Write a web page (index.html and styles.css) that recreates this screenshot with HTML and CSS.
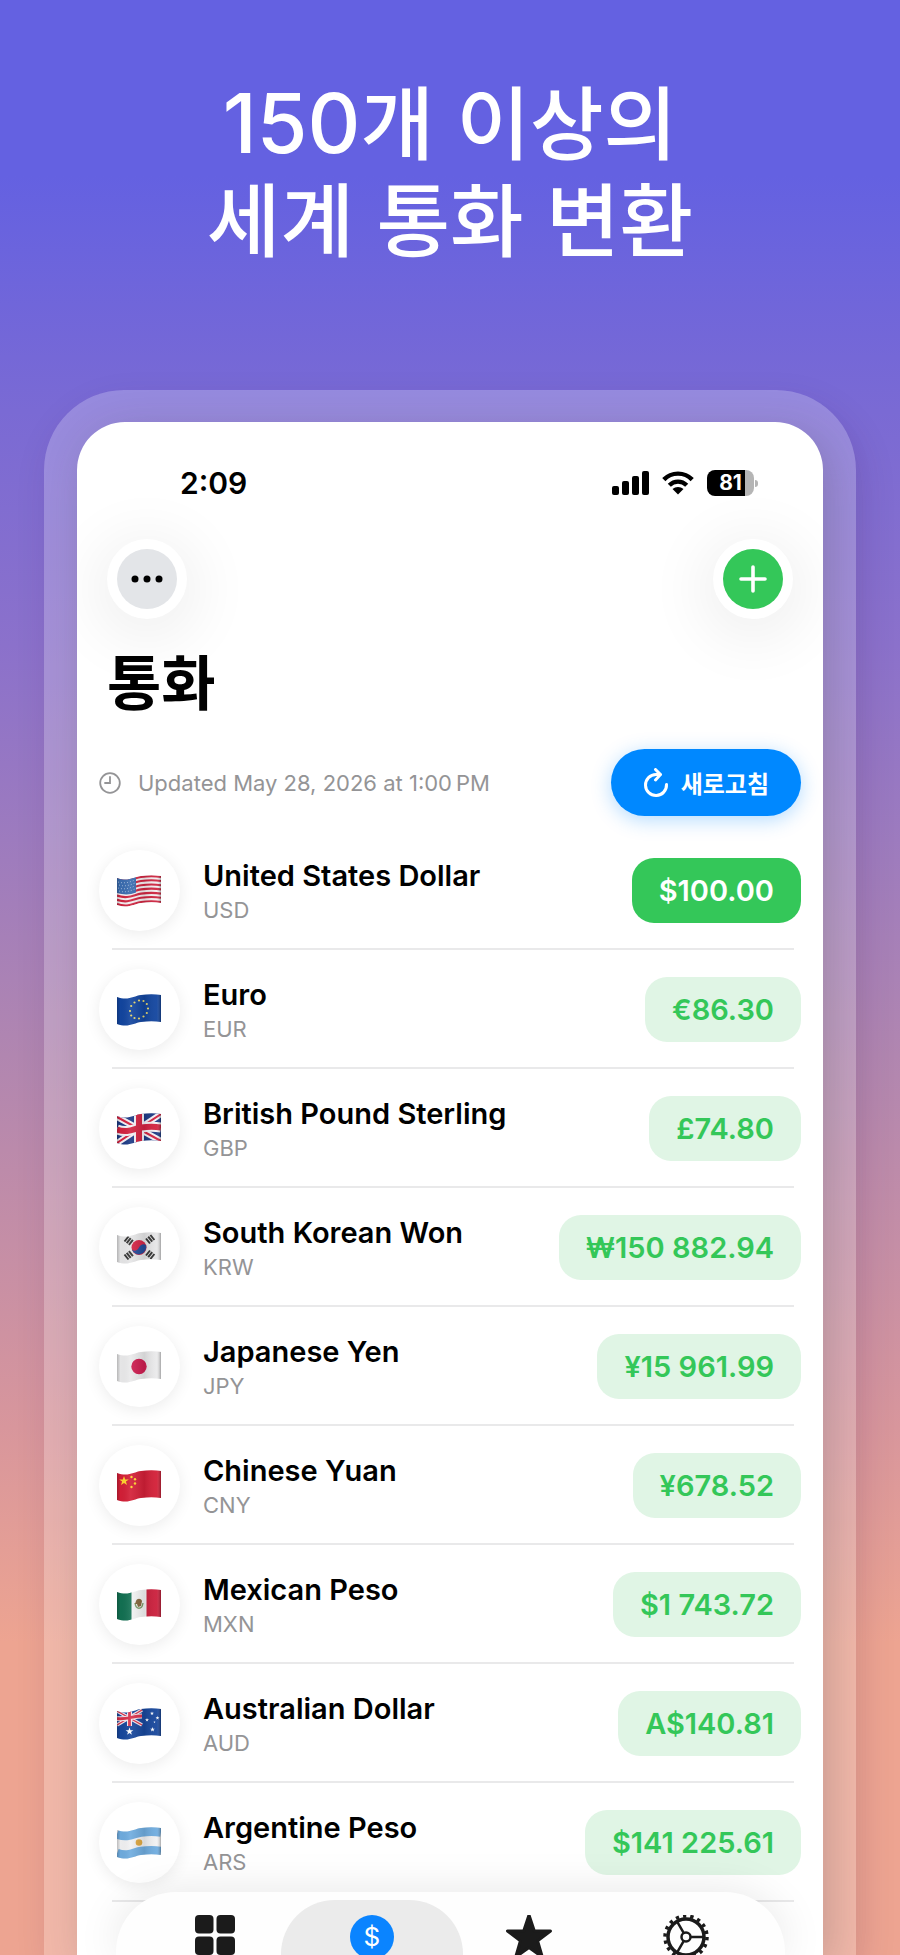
FILE: index.html
```html
<!DOCTYPE html>
<html lang="ko">
<head>
<meta charset="utf-8">
<meta name="viewport" content="width=device-width, initial-scale=1">
<title>통화</title>
<link rel="stylesheet" href="styles.css">
</head>
<body>
<svg class="defs" aria-hidden="true">
  <defs>
    <path id="wave" d="M0 3C11 7 17 2 24 1S38 0 44 1"/>
    <clipPath id="flag"><path d="M0 3C11 7 17 2 24 1S38 0 44 1V28C38 27 31 27 24 28S11 34 0 30Z"/></clipPath>
    <linearGradient id="fold">
      <stop offset="0" stop-color="#000" stop-opacity=".22"/>
      <stop offset=".08" stop-color="#000" stop-opacity=".02"/>
      <stop offset=".3" stop-color="#fff" stop-opacity=".08"/>
      <stop offset=".62" stop-color="#000" stop-opacity=".1"/>
      <stop offset=".9" stop-color="#fff" stop-opacity=".05"/>
      <stop offset="1" stop-color="#000" stop-opacity=".3"/>
    </linearGradient>
    <path id="star" d="M0-5L1.2-1.6 4.8-1.6 1.9.6 3 4 0 1.9-3 4-1.9.6-4.8-1.6-1.2-1.6Z"/>
  </defs>
</svg>
<main class="stage">
  <h1 class="headline"><span class="digits">150</span>개 이상의<br>세계 통화 변환</h1>
  <div class="phone">
    <div class="screen">
      <div class="status">
        <span class="time">2:09</span>
        <div class="status-icons">
          <svg width="37" height="24" viewBox="0 0 37 24"><g><rect x="0" y="15" width="7" height="9" rx="2"/><rect x="10" y="10" width="7" height="14" rx="2"/><rect x="20" y="5" width="7" height="19" rx="2"/><rect x="30" y="0" width="7" height="24" rx="2"/></g></svg>
          <svg width="32" height="24" viewBox="0 0 32 24"><g fill="none" stroke="#000" stroke-width="4.400"><path d="M1.800 8.600C9.500 .6 22.500 .6 30.200 8.600"/><path d="M7.300 14.200C12.200 9.400 19.800 9.400 24.700 14.200"/></g><path d="M10.500 18.100C13.600 15.200 18.400 15.200 21.500 18.100L16 23.500Z"/></svg>
          <div class="battery"><span>81</span></div>
        </div>
      </div>
      <div class="toolbar">
        <button class="round" aria-label="더 보기"><svg width="60" height="60" viewBox="0 0 60 60"><circle cx="30" cy="30" r="30" fill="#e3e5e8"/><circle cx="18" cy="30" r="3.500"/><circle cx="30" cy="30" r="3.500"/><circle cx="42" cy="30" r="3.500"/></svg></button>
        <button class="round" aria-label="추가"><svg width="60" height="60" viewBox="0 0 60 60"><circle cx="30" cy="30" r="30" fill="#34c759"/><path d="M30 18V42M18 30H42" stroke="#fff" stroke-width="3.600" stroke-linecap="round"/></svg></button>
      </div>
      <h2 class="title">통화</h2>
      <div class="update">
        <svg width="22" height="22" viewBox="0 0 22 22" fill="none" stroke="#949496" stroke-width="1.800" stroke-linecap="round"><circle cx="11" cy="11" r="9.800"/><path d="M11 5V11H6"/></svg>
        <span class="updated">Updated May 28, 2026 at 1:00&#8239;PM</span>
        <button class="refresh"><svg width="26" height="30" viewBox="0 0 26 30" fill="none" stroke="#fff" stroke-width="3" stroke-linecap="round" stroke-linejoin="round"><path d="M23.500 16.500A10.500 10.500 0 1 1 13 6.500H17"/><path d="M12.500 1.500L17.500 6.500 12.500 12"/></svg>새로고침</button>
      </div>
      <ul class="list">
        <li class="row">
          <span class="badge"><svg width="44" height="32" viewBox="0 0 44 32"><g clip-path="url(#flag)"><rect width="44" height="34" fill="#f4eef0"/><g fill="none" stroke="#cf2540" stroke-width="2.100"><use href="#wave" y="1"/><use href="#wave" y="5"/><use href="#wave" y="9.200"/><use href="#wave" y="13.400"/><use href="#wave" y="17.600"/><use href="#wave" y="21.800"/><use href="#wave" y="26"/></g><path d="M0 0H19V17.500C13 20 7 20 0 18Z" fill="#3a6caf"/><g fill="none" stroke="#b9cde8" stroke-width=".8" stroke-dasharray="1 2"><path d="M1 7C8 9 13 7 18 5M2 10C8 12 13 10 18 8M1 13C8 15 13 13 18 11M2 16C8 18 13 16 18 14"/></g><rect width="44" height="34" fill="url(#fold)"/></g></svg></span>
          <span class="name"><b>United States Dollar</b><small>USD</small></span>
          <button class="amount active">$100.00</button>
        </li>
        <li class="row">
          <span class="badge"><svg width="44" height="32" viewBox="0 0 44 32"><g clip-path="url(#flag)"><rect width="44" height="34" fill="#12459f"/><g fill="#e9d86b"><circle cx="22" cy="6.500" r="1.100"/><circle cx="26.500" cy="7" r="1.100"/><circle cx="29.800" cy="10" r="1.100"/><circle cx="31" cy="14.500" r="1.100"/><circle cx="29.800" cy="19" r="1.100"/><circle cx="26.500" cy="22.500" r="1.100"/><circle cx="22" cy="24.500" r="1.100"/><circle cx="17.500" cy="24" r="1.100"/><circle cx="14.200" cy="21.500" r="1.100"/><circle cx="13" cy="17" r="1.100"/><circle cx="14.200" cy="12" r="1.100"/><circle cx="17.500" cy="8.500" r="1.100"/></g><rect width="44" height="34" fill="url(#fold)"/></g></svg></span>
          <span class="name"><b>Euro</b><small>EUR</small></span>
          <button class="amount">€86.30</button>
        </li>
        <li class="row">
          <span class="badge"><svg width="44" height="32" viewBox="0 0 44 32"><g clip-path="url(#flag)"><rect width="44" height="34" fill="#1c3a85"/><path d="M0 4L44 28M0 30L44 1" stroke="#f4f0f4" stroke-width="6"/><path d="M0 4L44 28M0 30L44 1" stroke="#d32240" stroke-width="2"/><path d="M22 0V34" stroke="#f4f0f4" stroke-width="10"/><g fill="none"><use href="#wave" y="13.500" stroke="#f4f0f4" stroke-width="10"/><use href="#wave" y="13.500" stroke="#d32240" stroke-width="6"/></g><path d="M22 0V34" stroke="#d32240" stroke-width="6"/><rect width="44" height="34" fill="url(#fold)"/></g></svg></span>
          <span class="name"><b>British Pound Sterling</b><small>GBP</small></span>
          <button class="amount">£74.80</button>
        </li>
        <li class="row">
          <span class="badge"><svg width="44" height="32" viewBox="0 0 44 32"><g clip-path="url(#flag)"><rect width="44" height="34" fill="#e6e6e7"/><circle cx="22" cy="15.500" r="7.500" fill="#d32546"/><path d="M14.800 17.500A7.500 7.500 0 0 0 29.200 13.500C27 11.500 24 12 22 15.500 20 19 17 19.500 14.800 17.500Z" fill="#234a98"/><g stroke="#333" stroke-width="2"><path d="M7.500 9.500L11.500 4.500M9.700 11.200L13.700 6.200M11.900 12.900L15.900 7.900M29 6.500L33 11.500M31.200 4.700L35.200 9.700M33.400 3L37.400 8M7.500 22.500L11.500 27.500M9.700 20.800L13.700 25.800M11.900 19.100L15.900 24.100M29 23.500L33 18.500M31.200 25.200L35.200 20.200M33.400 27L37.400 22"/></g><rect width="44" height="34" fill="url(#fold)"/></g></svg></span>
          <span class="name"><b>South Korean Won</b><small>KRW</small></span>
          <button class="amount">₩150 882.94</button>
        </li>
        <li class="row">
          <span class="badge"><svg width="44" height="32" viewBox="0 0 44 32"><g clip-path="url(#flag)"><rect width="44" height="34" fill="#eaeaeb"/><circle cx="22" cy="15.500" r="7.700" fill="#cd1d50"/><rect width="44" height="34" fill="url(#fold)"/></g></svg></span>
          <span class="name"><b>Japanese Yen</b><small>JPY</small></span>
          <button class="amount">¥15 961.99</button>
        </li>
        <li class="row">
          <span class="badge"><svg width="44" height="32" viewBox="0 0 44 32"><g clip-path="url(#flag)"><rect width="44" height="34" fill="#d31f37"/><g fill="#ffd42e"><use href="#star" transform="translate(7 11)"/><circle cx="14.500" cy="7" r="1.200"/><circle cx="18" cy="9.200" r="1.200"/><circle cx="18" cy="13.500" r="1.200"/><circle cx="14.500" cy="17" r="1.200"/></g><rect width="44" height="34" fill="url(#fold)"/></g></svg></span>
          <span class="name"><b>Chinese Yuan</b><small>CNY</small></span>
          <button class="amount">¥678.52</button>
        </li>
        <li class="row">
          <span class="badge"><svg width="44" height="32" viewBox="0 0 44 32"><g clip-path="url(#flag)"><rect width="44" height="34" fill="#f4f4f4"/><rect width="14.500" height="34" fill="#127052"/><rect x="29.500" width="15" height="34" fill="#cb1f3c"/><path d="M18 14C19 21 25 21 26 14" fill="none" stroke="#7d9d68" stroke-width="1.400"/><path d="M19 12C20 9 24 9 25 12L24 17 21 18 20 15 18 15Z" fill="#85663c"/><rect width="44" height="34" fill="url(#fold)"/></g></svg></span>
          <span class="name"><b>Mexican Peso</b><small>MXN</small></span>
          <button class="amount">$1 743.72</button>
        </li>
        <li class="row">
          <span class="badge"><svg width="44" height="32" viewBox="0 0 44 32"><g clip-path="url(#flag)"><rect width="44" height="34" fill="#17479c"/><path d="M0 3L25 17M0 17L25 2" stroke="#f2e9ef" stroke-width="3.600"/><path d="M0 3L25 17M0 17L25 2" stroke="#d7304a" stroke-width="1.400"/><path d="M12.500 0V18M0 10.500C9 12 16 8 25 8" fill="none" stroke="#f2e9ef" stroke-width="5"/><path d="M12.500 0V18M0 10.500C9 12 16 8 25 8" fill="none" stroke="#d7304a" stroke-width="2.800"/><g fill="#fff"><use href="#star" transform="translate(12.500 23.500) scale(.8)"/><use href="#star" transform="translate(35 5.500) scale(.4)"/><use href="#star" transform="translate(30 12) scale(.4)"/><use href="#star" transform="translate(40.500 10) scale(.4)"/><use href="#star" transform="translate(37.500 14) scale(.22)"/><use href="#star" transform="translate(35.500 21.500) scale(.5)"/></g><rect width="44" height="34" fill="url(#fold)"/></g></svg></span>
          <span class="name"><b>Australian Dollar</b><small>AUD</small></span>
          <button class="amount">A$140.81</button>
        </li>
        <li class="row">
          <span class="badge"><svg width="44" height="32" viewBox="0 0 44 32"><g clip-path="url(#flag)"><rect width="44" height="34" fill="#f1f1f2"/><g fill="none" stroke="#6facdf" stroke-width="9.500"><use href="#wave" y="4"/><use href="#wave" y="23.500"/></g><circle cx="22" cy="15.500" r="3.300" fill="#dda63f"/><rect width="44" height="34" fill="url(#fold)"/></g></svg></span>
          <span class="name"><b>Argentine Peso</b><small>ARS</small></span>
          <button class="amount">$141 225.61</button>
        </li>
      </ul>
      <nav class="tabs">
        <button class="tab" aria-label="대시보드"><svg width="40" height="40" viewBox="0 0 40 40" fill="#1b1b1b"><rect width="18.500" height="18.500" rx="4"/><rect x="21.500" width="18.500" height="18.500" rx="4"/><rect y="21.500" width="18.500" height="18.500" rx="4"/><rect x="21.500" y="21.500" width="18.500" height="18.500" rx="4"/></svg></button>
        <button class="tab selected" aria-label="통화"><span class="coin">$</span></button>
        <button class="tab" aria-label="즐겨찾기"><svg width="48" height="46" viewBox="0 0 48 46"><path d="M24 0L29.300 16H45.500L32.600 25.800 37.300 42 24 32.500 10.700 42 15.400 25.800 2.500 16H18.700Z" fill="#1b1b1b" stroke="#1b1b1b" stroke-width="3" stroke-linejoin="round"/></svg></button>
        <button class="tab" aria-label="설정"><svg width="46" height="46" viewBox="0 0 46 46" fill="none" stroke="#1b1b1b"><circle cx="23" cy="22" r="21" stroke-width="3.500" stroke-dasharray="3.300 4.030"/><circle cx="23" cy="22" r="18" stroke-width="3.500"/><circle cx="23" cy="22" r="4.500" stroke-width="2.500"/><path d="M28 22H41M20.500 17.700L14 6.400M20.500 26.300L14 37.600" stroke-width="2.500"/></svg></button>
      </nav>
    </div>
  </div>
</main>
</body>
</html>
```

FILE: styles.css
```css
* { box-sizing: border-box; }
body { margin: 0; font-family: Inter, "Noto Sans CJK KR", sans-serif; }
button { font: inherit; border: 0; padding: 0; cursor: pointer; }
svg { display: block; flex: none; }
.defs { position: absolute; width: 0; height: 0; }

.stage {
  height: 100vh;
  min-height: 900px;
  overflow: hidden;
  display: flex;
  flex-direction: column;
  padding: 0 44px;
  background: linear-gradient(#6461e1 0%, #6461e1 9%, #7a6ad4 21%, #8b71cb 33%, #b186b0 54%, #d8969c 73%, #eda491 84%, #eda491 100%);
}
.headline {
  margin: 0;
  padding: 70px 0 126px;
  color: #fff;
  font: 500 80px/97px "Noto Sans CJK KR", sans-serif;
  text-align: center;
}
.digits { font: 500 82px/80px Inter, sans-serif; }
.phone {
  flex: 1;
  min-height: 0;
  display: flex;
  padding: 32px 33px 0;
  border-radius: 80px 80px 0 0;
  background: rgba(255, 255, 255, .22);
  box-shadow: 6px 14px 36px rgba(60, 20, 80, .12);
}
.screen {
  position: relative;
  flex: 1;
  min-width: 0;
  overflow: hidden;
  padding: 0 22px;
  border-radius: 48px 48px 0 0;
  background: #fff;
  box-shadow: 8px 10px 40px rgba(60, 50, 60, .22);
}
.status {
  display: flex;
  justify-content: space-between;
  align-items: center;
  padding: 40px 47px 0 81px;
}
.time { font-size: 30px; line-height: 42px; font-weight: 600; }
.status-icons { display: flex; align-items: center; gap: 13px; }
.battery {
  position: relative;
  width: 47px;
  height: 26px;
  border-radius: 8px;
  background: linear-gradient(90deg, #000 81%, #b5b5b5 81%);
  color: #fff;
  font-size: 21px;
  font-weight: 700;
  line-height: 26px;
  text-align: center;
}
.battery::after {
  content: "";
  position: absolute;
  left: 48px;
  top: 10px;
  width: 3px;
  height: 7px;
  border-radius: 0 3px 3px 0;
  background: #b5b5b5;
}
.toolbar {
  display: flex;
  justify-content: space-between;
  padding: 35px 8px 0;
}
.round {
  display: grid;
  place-items: center;
  width: 80px;
  height: 80px;
  border-radius: 50%;
  background: #fff;
  box-shadow: 0 10px 60px 14px rgba(0, 0, 0, .06);
}
.title {
  margin: 0;
  padding: 21px 8px 0;
  font: 700 59px/80px "Noto Sans CJK KR", sans-serif;
}
.update {
  display: flex;
  align-items: center;
  padding-top: 29px;
}
.updated { margin-left: 17px; flex: 1; color: #949496; font-size: 22px; }
.refresh {
  display: flex;
  align-items: center;
  gap: 12px;
  height: 67px;
  padding: 0 32px;
  border-radius: 34px;
  background: #0088ff;
  color: #fff;
  font-size: 24px;
  font-weight: 700;
  box-shadow: 0 4px 20px rgba(0, 136, 255, .3);
}
.list { list-style: none; margin: 0; padding: 15px 0 0; }
.row {
  position: relative;
  display: flex;
  align-items: center;
  height: 119px;
}
.row::after {
  content: "";
  position: absolute;
  left: 13px;
  right: 7px;
  bottom: 0;
  height: 2px;
  background: #e9e9ea;
}
.badge {
  display: grid;
  place-items: center;
  width: 81px;
  height: 81px;
  padding-right: 2px;
  border-radius: 50%;
  background: #fff;
  box-shadow: 0 3px 16px rgba(0, 0, 0, .08);
}
.name { flex: 1; margin-left: 23px; }
.name b { display: block; font-size: 29px; line-height: 38px; font-weight: 600; }
.name small { display: block; font-size: 22px; line-height: 30px; color: #949496; }
.amount {
  height: 65px;
  padding: 0 27px;
  border-radius: 22px;
  background: #e0f5e5;
  color: #34c759;
  font-size: 29px;
  font-weight: 600;
}
.amount.active { background: #34c759; color: #fff; }
.tabs {
  position: absolute;
  left: 39px;
  right: 38px;
  bottom: 0;
  height: 63px;
  display: grid;
  grid-template-columns: repeat(4, minmax(0, 1fr));
  padding: 8px 20px 0;
  border-radius: 60px 60px 0 0;
  background: #fefefe;
  box-shadow: 0 0 44px rgba(0, 0, 0, .1);
}
.tab {
  display: flex;
  justify-content: center;
  align-items: flex-start;
  height: 55px;
  overflow: hidden;
  padding-top: 15px;
  background: none;
}
.selected { margin: 0 -12px; border-radius: 54px 54px 0 0; background: #ebebeb; }
.coin {
  width: 44px;
  height: 44px;
  border-radius: 50%;
  background: #0a84ff;
  color: #fff;
  font-size: 26px;
  line-height: 44px;
}
```
